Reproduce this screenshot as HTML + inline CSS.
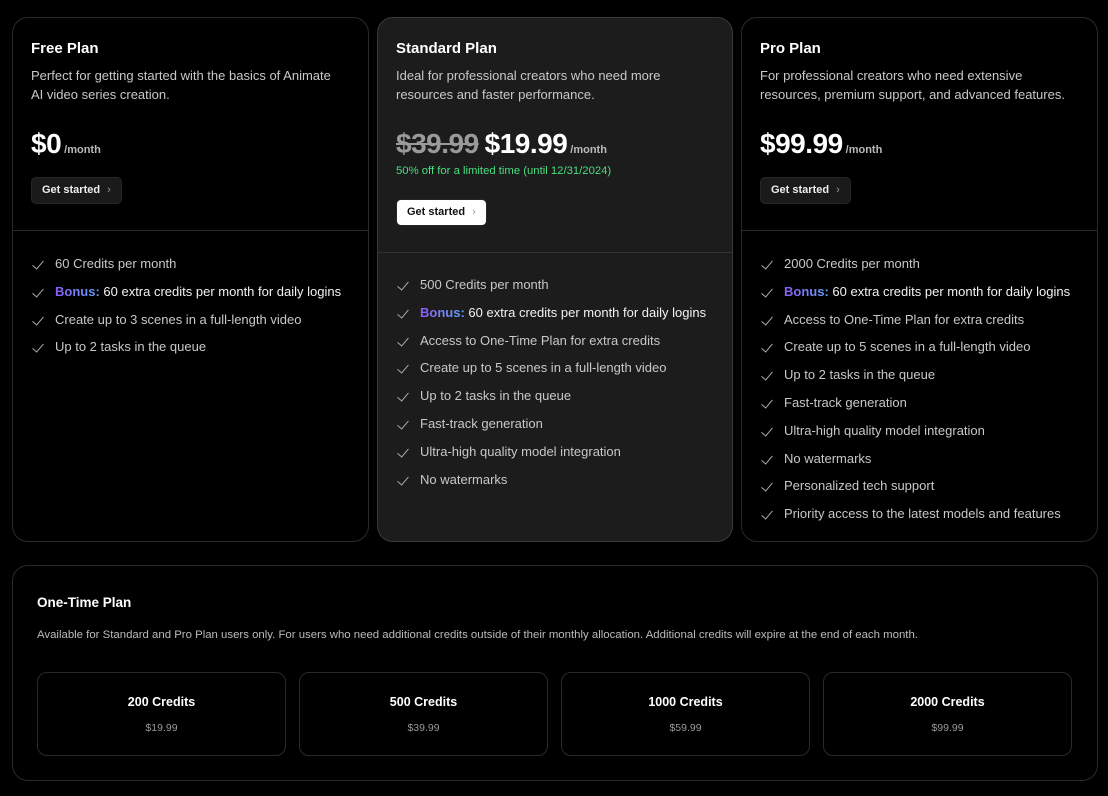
<!DOCTYPE html>
<html><head><meta charset="utf-8"><style>
*{box-sizing:border-box;margin:0;padding:0}
body{width:1108px;height:796px;background:#000;font-family:"Liberation Sans",sans-serif;color:#fff;position:relative;overflow:hidden}
.card{position:absolute;top:17px;height:525px;border:1px solid #2a2a2a;border-radius:16px;background:#000}
.card.std{background:#1c1c1c;border-color:#3a3a3a}
.title{position:absolute;left:18px;top:22px;font-size:15px;font-weight:bold}
.desc{position:absolute;left:18px;top:48px;width:312px;font-size:13px;line-height:19px;color:#c8c8c8}
.price{position:absolute;left:18px;top:110px;font-size:28px;font-weight:bold;letter-spacing:-0.5px;white-space:nowrap}
.price small{font-size:11px;font-weight:bold;color:#bbb;letter-spacing:0;margin-left:3px}
.price s{color:#9a9a9a;margin-right:6px}
.btn{position:absolute;left:18px;height:27px;padding:0 10px;border-radius:5px;background:#1a1a1a;border:1px solid #262626;font-size:11px;font-weight:bold;line-height:25px;color:#eee}
.btn span{color:#999;margin-left:7px;font-weight:normal}
.btn.w{background:#fff;color:#111}
.div{position:absolute;left:0;right:0;height:1px;background:#2a2a2a}
ul{position:absolute;left:19px;list-style:none}
li{height:27.8px;font-size:13px;color:#c8c8c8;white-space:nowrap;position:relative;padding-left:23px;line-height:16px}
li:before{content:"";position:absolute;left:3px;top:2px;width:5px;height:10px;border-right:1.3px solid #aaa;border-bottom:1.3px solid #aaa;transform:rotate(40deg)}
li.b{color:#f2f2f2}
.bo{font-weight:bold;background:linear-gradient(90deg,#8b5cf6,#60a5fa);-webkit-background-clip:text;background-clip:text;color:transparent}
.green{position:absolute;left:18px;top:147px;font-size:11.3px;color:#4ade80}
.ot{position:absolute;left:12px;top:565px;width:1086px;height:216px;border:1px solid #2a2a2a;border-radius:16px}
.box{position:absolute;top:106px;width:249px;height:84px;border:1px solid #2a2a2a;border-radius:10px;text-align:center}
.box b{display:block;margin-top:22px;font-size:12.5px}
.box i{display:block;font-style:normal;margin-top:13px;font-size:10.5px;color:#999}
</style></head><body>
<div class="card" style="left:12px;width:357px">
<div class="title">Free Plan</div>
<div class="desc">Perfect for getting started with the basics of Animate AI video series creation.</div>
<div class="price">$0<small>/month</small></div>
<div class="btn" style="top:159px">Get started<span>›</span></div>
<div class="div" style="top:212px"></div>
<ul style="top:238px">
<li>60 Credits per month</li>
<li class="b"><span class="bo">Bonus:</span> 60 extra credits per month for daily logins</li>
<li>Create up to 3 scenes in a full-length video</li>
<li>Up to 2 tasks in the queue</li>
</ul></div>
<div class="card std" style="left:377px;width:356px">
<div class="title">Standard Plan</div>
<div class="desc" style="width:300px">Ideal for professional creators who need more resources and faster performance.</div>
<div class="price"><s>$39.99</s>$19.99<small>/month</small></div>
<div class="green">50% off for a limited time (until 12/31/2024)</div>
<div class="btn w" style="top:181px">Get started<span>›</span></div>
<div class="div" style="top:234px;background:#333"></div>
<ul style="top:259px">
<li>500 Credits per month</li>
<li class="b"><span class="bo">Bonus:</span> 60 extra credits per month for daily logins</li>
<li>Access to One-Time Plan for extra credits</li>
<li>Create up to 5 scenes in a full-length video</li>
<li>Up to 2 tasks in the queue</li>
<li>Fast-track generation</li>
<li>Ultra-high quality model integration</li>
<li>No watermarks</li>
</ul></div>
<div class="card" style="left:741px;width:357px">
<div class="title">Pro Plan</div>
<div class="desc">For professional creators who need extensive resources, premium support, and advanced features.</div>
<div class="price">$99.99<small>/month</small></div>
<div class="btn" style="top:159px">Get started<span>›</span></div>
<div class="div" style="top:212px"></div>
<ul style="top:238px">
<li>2000 Credits per month</li>
<li class="b"><span class="bo">Bonus:</span> 60 extra credits per month for daily logins</li>
<li>Access to One-Time Plan for extra credits</li>
<li>Create up to 5 scenes in a full-length video</li>
<li>Up to 2 tasks in the queue</li>
<li>Fast-track generation</li>
<li>Ultra-high quality model integration</li>
<li>No watermarks</li>
<li>Personalized tech support</li>
<li>Priority access to the latest models and features</li>
</ul></div>
<div class="ot">
<div style="position:absolute;left:24px;top:29px;font-size:13.5px;font-weight:bold">One-Time Plan</div>
<div style="position:absolute;left:24px;top:63px;font-size:11.4px;color:#bbb;white-space:nowrap">Available for Standard and Pro Plan users only. For users who need additional credits outside of their monthly allocation. Additional credits will expire at the end of each month.</div>
<div class="box" style="left:24px"><b>200 Credits</b><i>$19.99</i></div>
<div class="box" style="left:286px"><b>500 Credits</b><i>$39.99</i></div>
<div class="box" style="left:548px"><b>1000 Credits</b><i>$59.99</i></div>
<div class="box" style="left:810px"><b>2000 Credits</b><i>$99.99</i></div>
</div>
</body></html>
